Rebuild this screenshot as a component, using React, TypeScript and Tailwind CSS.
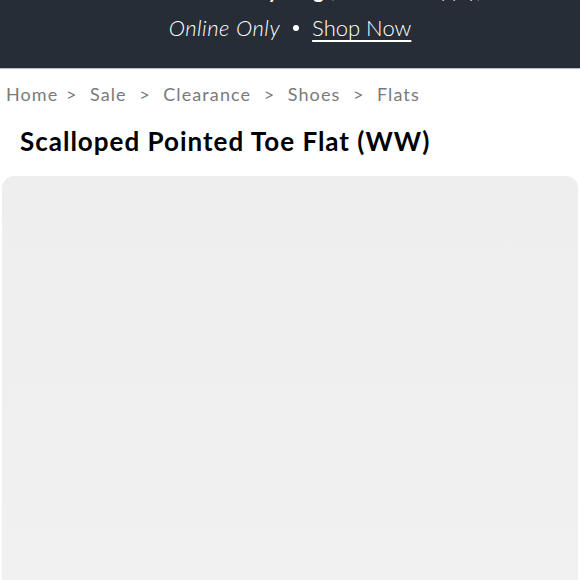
export default function App() {
  const crumbs = ["Home", "Sale", "Clearance", "Shoes", "Flats"];

  return (
    <div className="w-[580px] h-[580px] overflow-hidden bg-white font-['Lato','Liberation_Sans',sans-serif]">
      {/* promo banner, first line scrolled off the top */}
      <div className="bg-[#262d37] text-white text-center -mt-[27px] pt-[4px] pb-[23px] border-b border-[#b9bcc0]">
        <div className="text-[20px] leading-[26px] h-[34px] whitespace-nowrap">
          <span className="font-bold">Extra 40% Off Everything</span>{" "}
          <span className="font-light">(Exclusions Apply)</span>
        </div>
        <div className="flex items-center justify-center gap-[13px] text-[22px] leading-[34px] font-light">
          <span className="italic tracking-[0.5px]">Online Only</span>
          <span className="w-[6px] h-[6px] rounded-full bg-white" />
          <a className="underline underline-offset-[4px] decoration-[1.5px]">Shop Now</a>
        </div>
      </div>

      <nav className="flex items-center gap-[12.5px] px-[6px] pt-[14px] text-[18px] leading-[22px] tracking-[1.1px] text-[#7a7a7a]">
        {crumbs.map((c, i) => (
          <span key={c} className="flex items-center gap-[12.5px]">
            {i > 0 && <span className={i === 1 ? "-ml-[5px]" : ""}>&gt;</span>}
            <span>{c}</span>
          </span>
        ))}
      </nav>

      <h1 className="px-[20px] pt-[20px] text-[26px] leading-[32px] font-bold text-black tracking-[1px]">
        Scalloped Pointed Toe Flat (WW)
      </h1>

      <div className="mx-[2px] mt-[19px] h-[420px] rounded-[12px] bg-gradient-to-b from-[#eeeeee] to-[#f1f1f1]" />
    </div>
  );
}
